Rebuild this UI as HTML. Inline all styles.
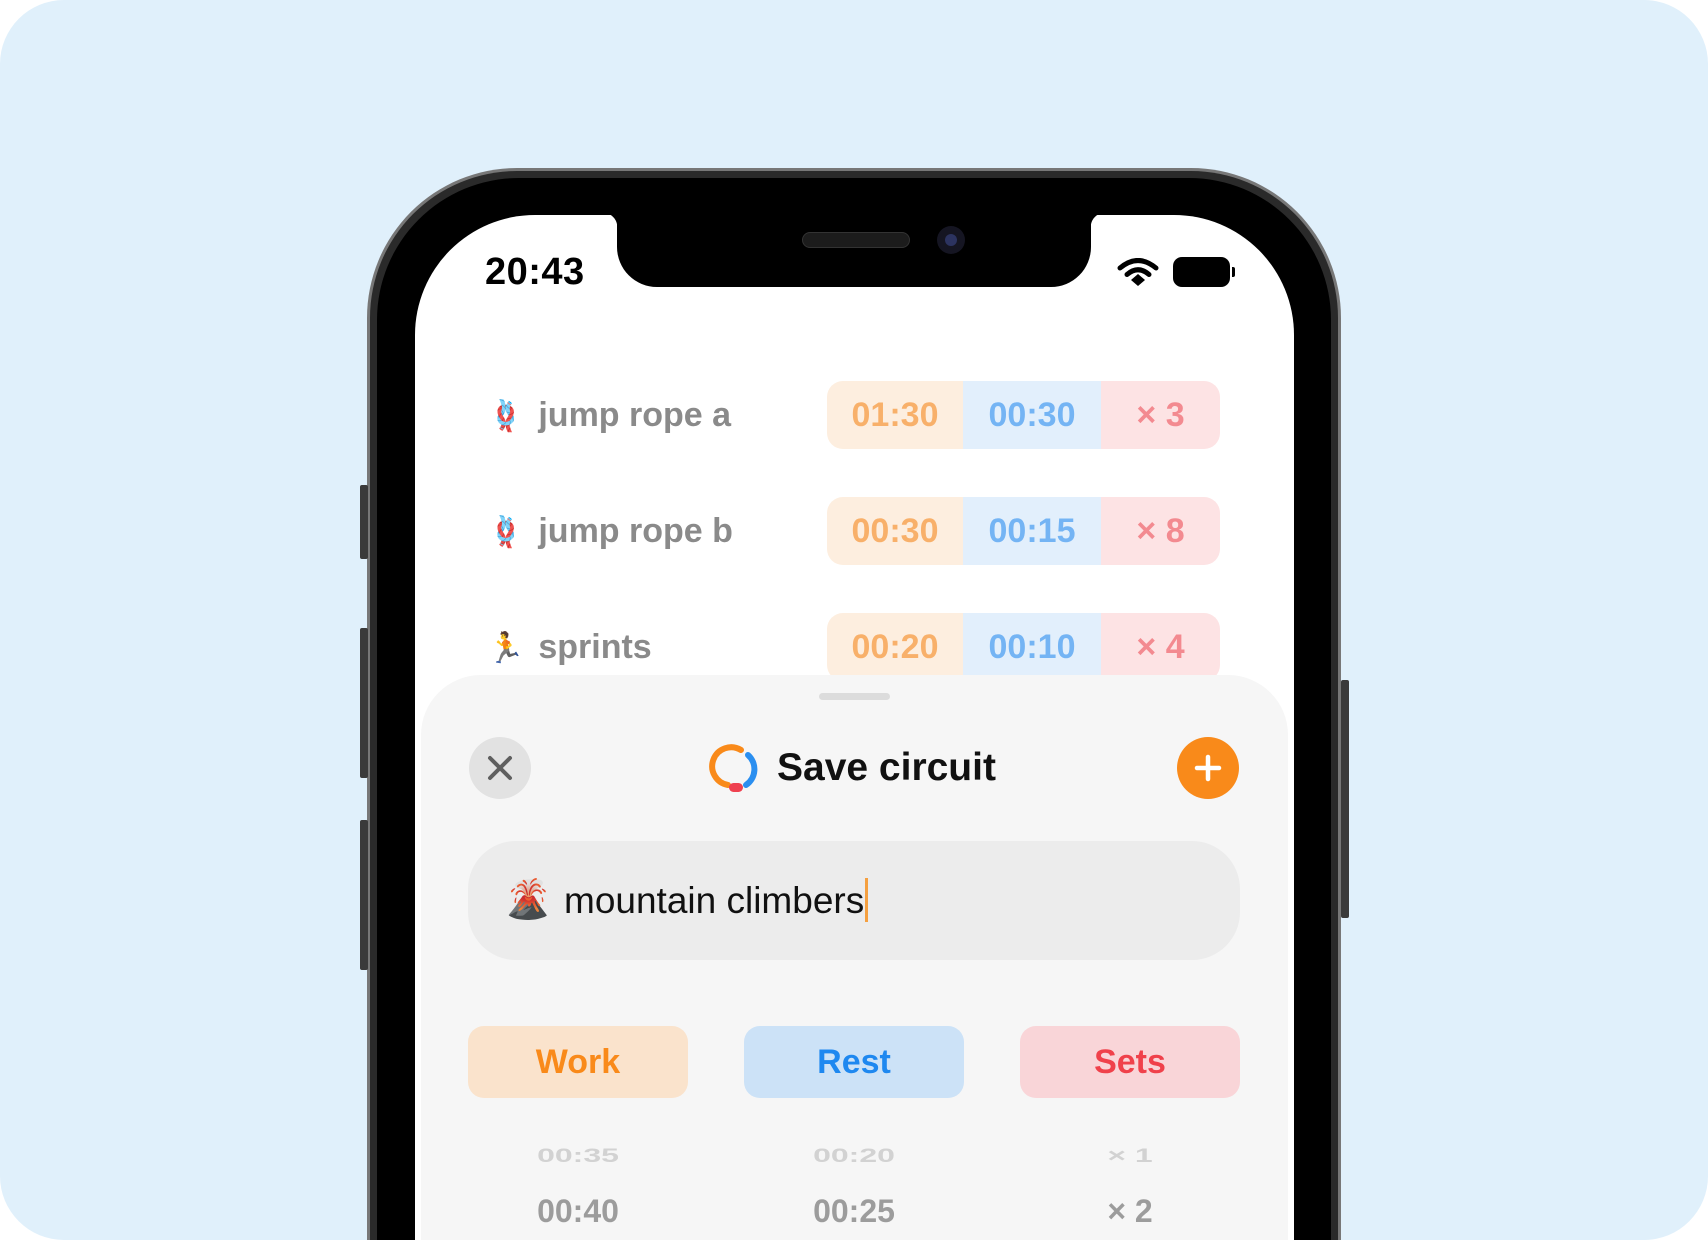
<!DOCTYPE html>
<html><head><meta charset="utf-8">
<style>
*{margin:0;padding:0;box-sizing:border-box}
html,body{width:1708px;height:1240px;overflow:hidden;background:#fff}
body{font-family:"Liberation Sans","DejaVu Sans",sans-serif;position:relative}
.bg{position:absolute;left:0;top:0;width:1708px;height:1240px;background:#e0f0fb;border-radius:64px;overflow:hidden}
.frame{position:absolute;left:367px;top:168px;width:974px;height:1072px;border-radius:150px 150px 0 0;background:#2a2a2a;border:3px solid #777;border-bottom:none}
.frame2{position:absolute;left:377px;top:178px;width:954px;height:1062px;border-radius:142px 142px 0 0;background:#000}
.btn{position:absolute;background:#3a3a3a;width:8px;border-radius:2px}
.screen{position:absolute;left:415px;top:215px;width:879px;height:1025px;border-radius:120px 120px 0 0;background:#fff;overflow:hidden}
.notch{position:absolute;left:202px;top:-2px;width:474px;height:74px;background:#000;border-radius:0 0 40px 40px}
.notch:before{content:"";position:absolute;left:-14px;top:0;width:14px;height:14px;background:radial-gradient(circle at 0 14px,transparent 14px,#000 14.5px)}
.notch:after{content:"";position:absolute;right:-14px;top:0;width:14px;height:14px;background:radial-gradient(circle at 14px 14px,transparent 14px,#000 14.5px)}
.speaker{position:absolute;left:185px;top:19px;width:108px;height:16px;border-radius:8px;background:#1c1c1c;border:1px solid #333}
.cam{position:absolute;left:320px;top:13px;width:28px;height:28px;border-radius:50%;background:#151522}
.cam:after{content:"";position:absolute;left:8px;top:8px;width:12px;height:12px;border-radius:50%;background:#2c3360}
.time{position:absolute;left:70px;top:36px;font-size:38px;font-weight:bold;color:#000;letter-spacing:0.5px}
.row{position:absolute;left:0;width:879px;height:68px}
.lbl{position:absolute;left:72px;top:0;height:68px;line-height:68px;font-size:34px;color:#8a8a8a;white-space:nowrap;font-weight:bold}
.lbl span{font-family:"DejaVu Sans",sans-serif;font-size:30px;margin-right:14px;font-weight:normal}
.pill{position:absolute;left:412px;top:0;width:393px;height:68px;border-radius:16px;overflow:hidden;display:flex}
.pill div{height:68px;line-height:68px;text-align:center;font-size:34px;font-weight:bold}
.sheet{position:absolute;left:6px;top:460px;width:867px;height:565px;background:#f6f6f6;border-radius:60px 60px 0 0;overflow:hidden}
.handle{position:absolute;left:398px;top:18px;width:71px;height:7px;border-radius:4px;background:#dcdcdc}
.circ{position:absolute;width:62px;height:62px;border-radius:50%}
.title{position:absolute;left:356px;top:71px;font-size:39px;font-weight:bold;color:#111}
.field{position:absolute;left:47px;top:166px;width:772px;height:119px;border-radius:48px;background:#ececec}
.field .t{position:absolute;left:96px;top:37px;font-size:37px;color:#111}
.field .e{position:absolute;left:36px;top:36px;font-size:38px;font-family:"DejaVu Sans",sans-serif}
.caret{display:inline-block;width:3px;height:44px;background:#f5a040;vertical-align:-9px;margin-left:1px}
.tab{position:absolute;top:351px;width:220px;height:72px;border-radius:16px;text-align:center;line-height:72px;font-size:34px;font-weight:bold}
.pk{position:absolute;width:220px;text-align:center;font-weight:bold}
.pk.s{transform:scaleY(0.62)}
</style></head><body>
<div class="bg">
 <div class="frame"></div>
 <div class="frame2"></div>
 <div class="btn" style="left:360px;top:485px;height:74px"></div>
 <div class="btn" style="left:360px;top:628px;height:150px"></div>
 <div class="btn" style="left:360px;top:820px;height:150px"></div>
 <div class="btn" style="left:1341px;top:680px;height:238px"></div>
 <div class="screen">
  <div class="notch"><div class="speaker"></div><div class="cam"></div></div>
  <div class="time">20:43</div>
  <svg style="position:absolute;left:702px;top:43px" width="42" height="28" viewBox="0 0 42 28">
   <path d="M3 10 Q21 -5 39 10" stroke="#000" stroke-width="5" fill="none" stroke-linecap="round"/>
   <path d="M10 16.5 Q21 7 32 16.5" stroke="#000" stroke-width="5" fill="none" stroke-linecap="round"/>
   <path d="M14 22 L21 16 L28 22 L21 28 Z" fill="#000"/>
  </svg>
  <div style="position:absolute;left:758px;top:42px;width:57px;height:30px;border-radius:9px;background:#000"></div>
  <div style="position:absolute;left:817px;top:52px;width:3px;height:10px;border-radius:0 2px 2px 0;background:#000"></div>

  <div class="row" style="top:166px"><div class="lbl"><span>🪢</span>jump rope a</div>
   <div class="pill"><div style="width:136px;background:#fdeedf;color:#f8b06a">01:30</div><div style="width:138px;background:#e2effc;color:#74b4f4">00:30</div><div style="width:119px;background:#fde3e4;color:#f38a90">× 3</div></div></div>
  <div class="row" style="top:282px"><div class="lbl"><span>🪢</span>jump rope b</div>
   <div class="pill"><div style="width:136px;background:#fdeedf;color:#f8b06a">00:30</div><div style="width:138px;background:#e2effc;color:#74b4f4">00:15</div><div style="width:119px;background:#fde3e4;color:#f38a90">× 8</div></div></div>
  <div class="row" style="top:398px"><div class="lbl"><span>🏃</span>sprints</div>
   <div class="pill"><div style="width:136px;background:#fdeedf;color:#f8b06a">00:20</div><div style="width:138px;background:#e2effc;color:#74b4f4">00:10</div><div style="width:119px;background:#fde3e4;color:#f38a90">× 4</div></div></div>

  <div class="sheet">
   <div class="handle"></div>
   <div class="circ" style="left:48px;top:62px;background:#e2e2e2"></div>
   <svg style="position:absolute;left:64px;top:78px" width="30" height="30" viewBox="0 0 30 30"><path d="M5 5 L25 25 M25 5 L5 25" stroke="#5f5f5f" stroke-width="4" stroke-linecap="round"/></svg>
   <svg style="position:absolute;left:286px;top:64px" width="60" height="60" viewBox="0 0 60 60">
    <path d="M34 11 A19 19 0 1 0 21 46" stroke="#f98a1a" stroke-width="6" fill="none" stroke-linecap="round"/>
    <path d="M41 16 A19 19 0 0 1 39 46" stroke="#2b8ff0" stroke-width="6" fill="none" stroke-linecap="round"/>
    <rect x="22" y="44" width="14" height="9" rx="4.5" fill="#ef4150"/>
   </svg>
   <div class="title">Save circuit</div>
   <div class="circ" style="left:756px;top:62px;background:#f98a1a"></div>
   <svg style="position:absolute;left:772px;top:78px" width="30" height="30" viewBox="0 0 30 30"><path d="M15 4 V26 M4 15 H26" stroke="#fff" stroke-width="4.5" stroke-linecap="round"/></svg>
   <div class="field"><div class="e">🌋</div><div class="t">mountain climbers<span class="caret"></span></div></div>
   <div class="tab" style="left:47px;background:#fae3cc;color:#f98a1a">Work</div>
   <div class="tab" style="left:323px;background:#cce2f7;color:#1e88f0">Rest</div>
   <div class="tab" style="left:599px;background:#f9d5d8;color:#f0414b">Sets</div>
   <div class="pk s" style="left:47px;top:462px;font-size:32px;color:#d2d2d2">00:35</div>
   <div class="pk s" style="left:323px;top:462px;font-size:32px;color:#d2d2d2">00:20</div>
   <div class="pk s" style="left:599px;top:462px;font-size:32px;color:#d2d2d2">× 1</div>
   <div class="pk" style="left:47px;top:518px;font-size:32px;color:#9c9c9c">00:40</div>
   <div class="pk" style="left:323px;top:518px;font-size:32px;color:#9c9c9c">00:25</div>
   <div class="pk" style="left:599px;top:518px;font-size:32px;color:#9c9c9c">× 2</div>
  </div>
 </div>
</div>
</body></html>
